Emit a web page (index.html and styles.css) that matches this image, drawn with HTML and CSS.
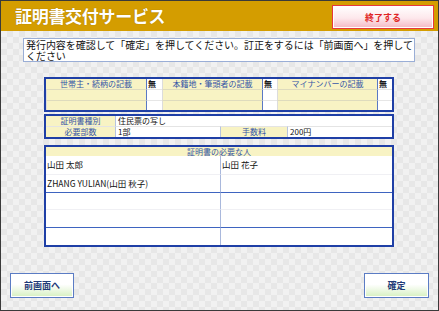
FILE: index.html
```html
<!DOCTYPE html>
<html lang="ja">
<head>
<meta charset="utf-8">
<title>証明書交付サービス</title>
<link rel="stylesheet" href="styles.css">
</head>
<body>
<div class="screen">
  <header class="topbar">
    <h1 class="title">証明書交付サービス</h1>
    <button class="btn-exit">終了する</button>
  </header>
  <main class="content">
    <p class="notice">発行内容を確認して「確定」を押してください。訂正をするには「前画面へ」を押して<br>ください</p>

    <div class="tbl flags">
      <div class="c lab">世帯主・続柄の記載</div><div class="c val sep">無</div>
      <div class="c lab">本籍地・筆頭者の記載</div><div class="c val sep">無</div>
      <div class="c lab">マイナンバーの記載</div><div class="c val sep">無</div>
      <div class="c lab row"></div><div class="c val sep row"></div>
      <div class="c lab row"></div><div class="c val sep row"></div>
      <div class="c lab row"></div><div class="c val sep row"></div>
      <div class="c lab row"></div><div class="c val sep row"></div>
      <div class="c lab row"></div><div class="c val sep row"></div>
      <div class="c lab row"></div><div class="c val sep row"></div>
    </div>

    <div class="tbl info">
      <div class="c lab">証明書種別</div><div class="c val wide">住民票の写し</div>
      <div class="c lab row">必要部数</div><div class="c val row">1部</div>
      <div class="c lab row">手数料</div><div class="c val row">200円</div>
    </div>

    <div class="tbl people">
      <div class="c lab head">証明書の必要な人</div>
      <div class="c p">山田 太郎</div><div class="c p r">山田 花子</div>
      <div class="c p lt">ZHANG YULIAN(山田 秋子)</div><div class="c p r lt"></div>
      <div class="c p bt"></div><div class="c p r bt"></div>
      <div class="c p lt"></div><div class="c p r lt"></div>
      <div class="c p bt"></div><div class="c p r bt"></div>
    </div>
  </main>
  <footer class="actions">
    <button class="btn-nav">前画面へ</button>
    <button class="btn-nav">確定</button>
  </footer>
</div>
</body>
</html>
```

FILE: styles.css
```css
* { box-sizing: border-box; margin: 0; padding: 0; }
body { margin: 0; font-family: "Noto Sans CJK JP", "Noto Sans", sans-serif; }

.screen {
  width: 439px; height: 311px;
  border: 1px solid #3a3a3a;
  display: flex; flex-direction: column;
  background-color: #eeeeee;
  background-image: repeating-conic-gradient(#f1f1f1 0 25%, #e7e7e7 0 50%);
  background-size: 12px 12px;
}

.topbar {
  height: 30px; flex: none;
  background: #d49d00;
  display: flex; align-items: flex-start; justify-content: space-between;
  padding: 4px 4px 0 14px;
}
.title {
  color: #fff; font-size: 17px; font-weight: bold; line-height: 22px;
  letter-spacing: -0.3px;
  text-shadow: 0 0 1px rgba(90,60,0,.5);
}
.btn-exit {
  width: 102px; height: 24px;
  border: 1px solid #e8383c;
  background: linear-gradient(#ffffff 0%, #fde8ec 55%, #f4b8c4 100%);
  color: #e02424; font-family: inherit; font-size: 9px; font-weight: bold;
  box-shadow: inset 0 0 0 1px #fff;
}

.content { display: flex; flex-direction: column; }

.notice {
  margin: 7px 0 0 22px;
  width: 392px; height: 24px;
  background: #fff; border: 1px solid #9aaed6;
  font-size: 10px; line-height: 11px; padding: 0 1px 0 2px;
  letter-spacing: -0.05px;
  white-space: nowrap; overflow: hidden;
  color: #111;
}

.tbl {
  margin-left: 43px; width: 350px;
  border: 2px solid #1f3fa6;
  display: grid; background: #fff;
}
.c { font-size: 8px; line-height: 10px; white-space: nowrap; overflow: hidden; }
.lab { background: #f8f3c4; color: #3556a6; text-align: center; }
.val { background: #fff; color: #111; padding-left: 2px; }

.flags { margin-top: 15px; grid-template-columns: 101px 15px 101px 14px 101px 14px; grid-template-rows: 10px 11px 10px; }
.flags .lab { border-right: 1px solid #5a78c4; }
.flags .val { font-weight: bold; padding-left: 1px; }
.flags .sep + .lab { border-left: 1px solid #dcdcdc; }
.flags .row { border-top: 1px solid #dedbbd; }
.flags .val.row { border-top-color: #e6e6e6; }

.info { margin-top: 2px; grid-template-columns: 70px 104px 68px 104px; grid-template-rows: 10px 11px; }
.info .lab { border-right: 1px solid #b7c4e0; }
.info .wide { grid-column: 2 / 5; }
.info .row { border-top: 1px solid #e4e4e4; }
.info .val.row + .lab { border-left: 1px solid #b7c4e0; }

.people { margin-top: 6px; grid-template-columns: 174px 172px; grid-template-rows: 9px 18px 18px 17px 18px 18px; }
.people .head { grid-column: 1 / 3; line-height: 9px; text-align: center; }
.people .p { background: #fff; color: #111; padding-left: 1px; line-height: 17px; font-size: 8.5px; }
.people .r { border-left: 1px solid #a9b8dc; }
.people .lt { border-top: 1px solid #f0f0f4; }
.people .bt { border-top: 1px solid #3e64c0; }

.actions {
  margin-top: auto;
  display: flex; justify-content: space-between;
  padding: 0 9px 12px 9px;
}
.btn-nav {
  width: 65px; height: 25px;
  border: 1px solid #5b7cc4;
  background: linear-gradient(#ffffff 0%, #ffffff 45%, #d6f0c0 100%);
  color: #1f3a78; font-family: inherit; font-size: 9px; font-weight: bold;
  box-shadow: inset 0 0 0 1px #fff;
}
.btn-nav:first-child { width: 64px; }
```
